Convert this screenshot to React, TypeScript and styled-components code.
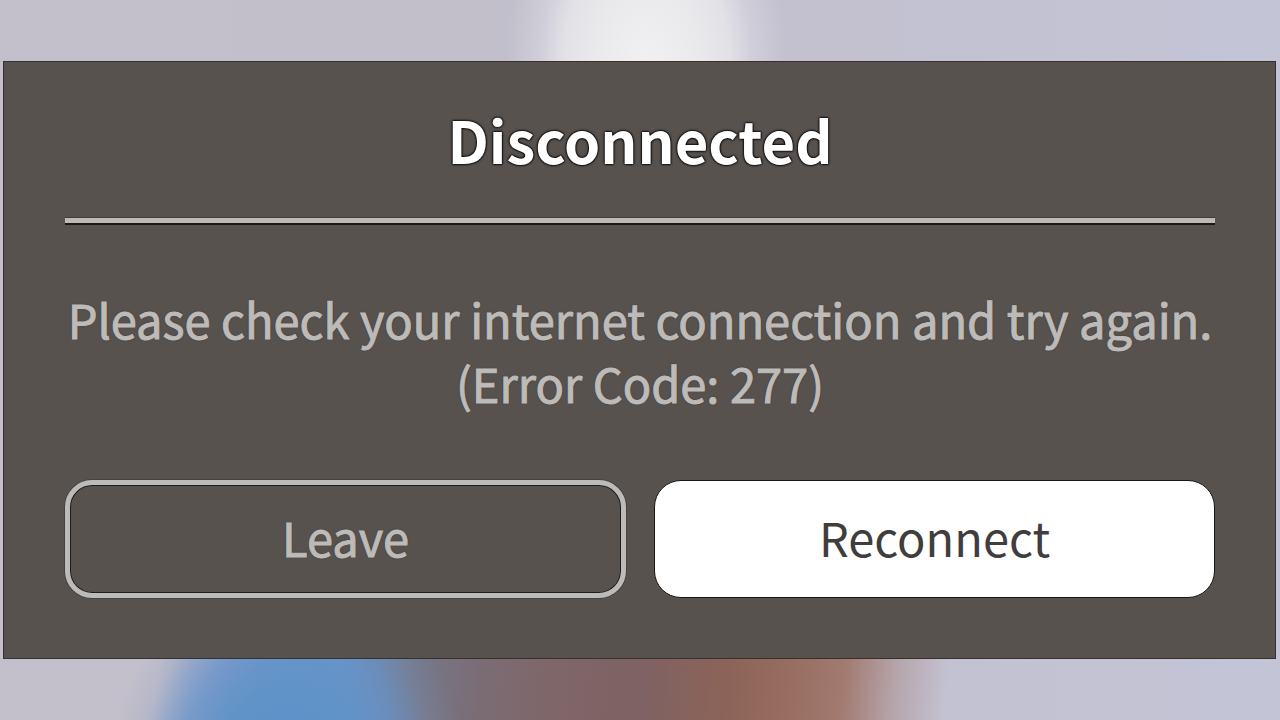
import React from "react";
import styled, { createGlobalStyle } from "styled-components";

const GlobalStyle = createGlobalStyle`
  *, *::before, *::after { box-sizing: border-box; }
  body {
    margin: 0;
    font-family: "Noto Sans CJK SC", "Noto Sans", sans-serif;
  }
`;

const Backdrop = styled.main`
  display: flex;
  align-items: center;
  justify-content: center;
  min-height: 100vh;
  padding: 60px 4px 61px 3px;
  background:
    radial-gradient(ellipse 11% 36% at 50.5% 11%, #f2f2f3 0%, #e9e8eb 40%, #e2e1e6 60%, rgba(214, 212, 222, 0.7) 76%, rgba(200, 198, 212, 0) 100%),
    radial-gradient(ellipse 14% 30% at 22.5% 109%, #5c90c8 0%, #6093c8 42%, rgba(104, 147, 200, 0.7) 64%, rgba(125, 150, 190, 0.2) 84%, rgba(150, 165, 200, 0) 100%),
    linear-gradient(96deg, rgba(170, 175, 208, 0) 13%, rgba(140, 163, 205, 0.8) 17%, #6f99c8 21%, #6394ca 27%, #75788a 33%, #7b6c74 38%, #7f6668 44%, #7e6264 50%, #8c6358 57%, #986e62 62%, #a27a70 66%, #b5a5ab 70%, rgba(194, 192, 210, 0) 74%) bottom / 100% 20% no-repeat,
    linear-gradient(90deg, #c3bfcb 0%, #c2bfcb 35%, #c3c1d0 65%, #c3c4d6 100%);
`;

const Dialog = styled.section`
  flex: 1;
  padding: 37px 60px 60px 61px;
  background: #58524f;
  border: 1px solid #34312f;
`;

const Title = styled.h1`
  margin: 0;
  color: #fff;
  font-size: 58px;
  font-weight: 700;
  line-height: 80px;
  text-align: center;
  text-shadow: 0 0 2px #000, 0 0 2px #000, 0 0 3px #000;
`;

const Divider = styled.hr`
  height: 5px;
  margin: 39px 0 64px;
  border: 0;
  background: #bdbbb4;
  box-shadow: 0 2px 0 #1c1918, 0 -1px 0 #423e3b;
`;

const Message = styled.p`
  margin: 0 -8px;
  color: #bdbbb9;
  font-size: 47px;
  font-weight: 400;
  line-height: 64px;
  text-align: center;
  text-shadow: 0 0 2px #292624;
  -webkit-text-stroke: 1px #bdbbb9;
`;

const Actions = styled.div`
  display: grid;
  grid-template-columns: 1fr 1fr;
  gap: 28px;
  margin-top: 65px;
`;

const Button = styled.button<{ $primary?: boolean }>`
  height: 118px;
  padding: 0 0 3px;
  border: ${(p) => (p.$primary ? "1px solid #171514" : "5px solid #bdbbb9")};
  border-radius: 27px;
  background: ${(p) => (p.$primary ? "#fff" : "transparent")};
  box-shadow: ${(p) => (p.$primary ? "none" : "0 0 0 1px #464240, inset 0 0 0 1px #1f1c1b")};
  color: ${(p) => (p.$primary ? "#403d3c" : "#bdbbb9")};
  font-family: inherit;
  font-size: 47px;
  font-weight: 400;
  line-height: 64px;
  text-shadow: ${(p) => (p.$primary ? "none" : "0 0 2px #292624")};
  -webkit-text-stroke: ${(p) => (p.$primary ? "0" : "1px #bdbbb9")};
  cursor: pointer;
`;

export default function App() {
  return (
    <>
      <GlobalStyle />
      <Backdrop>
        <Dialog role="alertdialog" aria-labelledby="title" aria-describedby="message">
          <Title id="title">Disconnected</Title>
          <Divider />
          <Message id="message">
            Please check your internet connection and try again.
            <br />
            (Error Code: 277)
          </Message>
          <Actions>
            <Button type="button">Leave</Button>
            <Button type="button" $primary>Reconnect</Button>
          </Actions>
        </Dialog>
      </Backdrop>
    </>
  );
}
